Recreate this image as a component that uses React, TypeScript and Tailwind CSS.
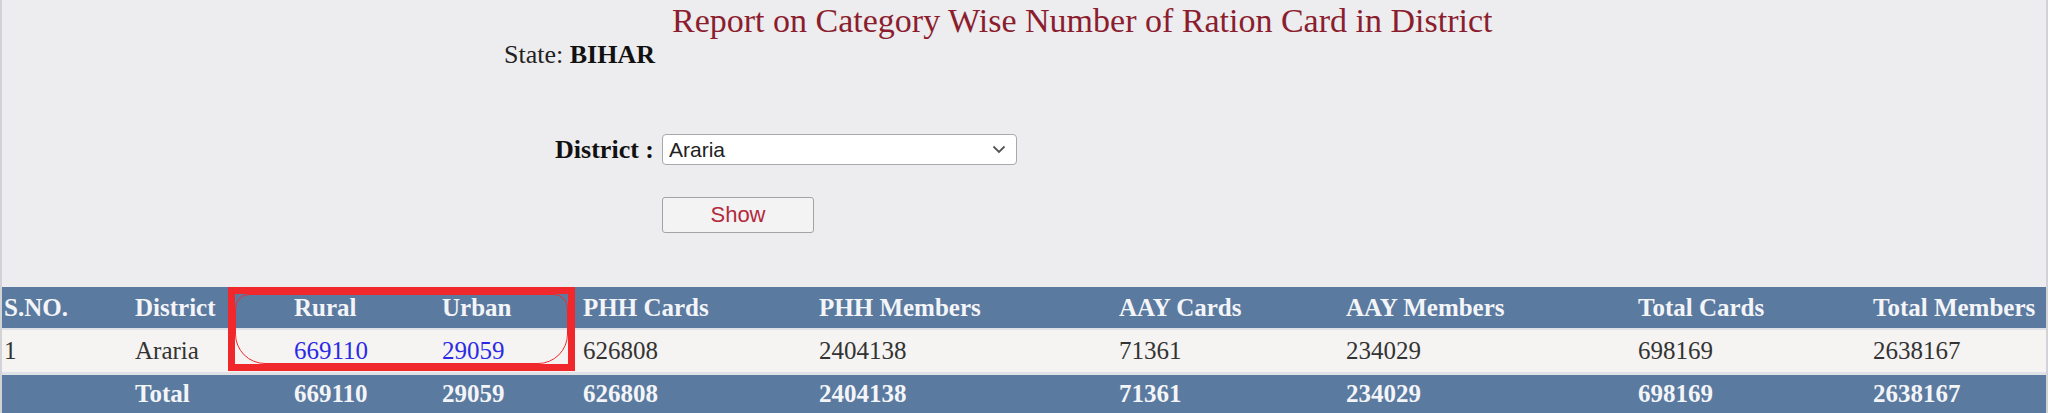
import { useState } from "react"

type Row = {
  sno: string
  district: string
  rural: string
  urban: string
  phhCards: string
  phhMembers: string
  aayCards: string
  aayMembers: string
  totalCards: string
  totalMembers: string
}

const rows: Row[] = [
  {
    sno: "1",
    district: "Araria",
    rural: "669110",
    urban: "29059",
    phhCards: "626808",
    phhMembers: "2404138",
    aayCards: "71361",
    aayMembers: "234029",
    totalCards: "698169",
    totalMembers: "2638167",
  },
]

export default function App() {
  const [district, setDistrict] = useState("Araria")

  return (
    <div className="min-h-[413px] w-[2048px] overflow-hidden bg-[#edecee] font-['Liberation_Serif',serif]">
      <div className="h-[413px] border-x-2 border-[#d3d2d6]">
        {/* Titulo */}
        <h1 className="pl-[670px] pt-[3px] text-[34px] font-normal leading-[36px] text-[#8b1e2e]">
          Report on Category Wise Number of Ration Card in District
        </h1>

        <div className="mt-[3px] pl-[502px] text-[26px] leading-[26px] text-[#222]">
          State: <span className="font-bold text-[#111]">BIHAR</span>
        </div>

        {/* Filtro */}
        <div className="mt-[66px] flex h-[31px] items-center">
          <label htmlFor="district" className="w-[660px] pr-[8px] text-right text-[26px] font-bold leading-[26px] text-[#111]">
            District :
          </label>
          <div className="relative h-[31px] w-[355px]">
            <select
              id="district"
              value={district}
              onChange={(e) => setDistrict(e.target.value)}
              className="h-full w-full appearance-none rounded-[4px] border border-[#a9a9ad] bg-white pl-[6px] font-['Liberation_Sans',sans-serif] text-[21px] leading-[29px] text-[#222] outline-none"
            >
              <option>Araria</option>
              <option>Arwal</option>
              <option>Aurangabad</option>
              <option>Banka</option>
            </select>
            <svg
              className="pointer-events-none absolute right-[11px] top-[11px] h-[9px] w-[14px]"
              viewBox="0 0 14 9"
              fill="none"
              stroke="#555"
              strokeWidth="1.8"
            >
              <path d="M1.5 1.5 L7 7 L12.5 1.5" />
            </svg>
          </div>
        </div>

        <div className="mt-[32px] pl-[660px]">
          <button
            type="button"
            className="h-[36px] w-[152px] rounded-[3px] border border-[#a3a3a6] bg-[#f3f3f4] font-['Liberation_Sans',sans-serif] text-[22px] leading-[34px] text-[#b22a3c]"
          >
            Show
          </button>
        </div>

        {/* Tabela */}
        <div className="relative mt-[54px]">
          <table className="w-[2044px] table-fixed border-collapse text-left text-[25px]">
            <thead>
              <tr className="h-[42px] border-b-2 border-[#dfe2e7] bg-[#5b7aa0] text-[#f4f5f8]">
                <th className="w-[132px] pl-[2px] font-bold">S.NO.</th>
                <th className="w-[157px] pl-[1px] font-bold">District</th>
                <th className="w-[148px] pl-[3px] font-bold">Rural</th>
                <th className="w-[141px] pl-[3px] font-bold">Urban</th>
                <th className="w-[236px] pl-[3px] font-bold">PHH Cards</th>
                <th className="w-[297px] pl-[3px] font-bold">PHH Members</th>
                <th className="w-[230px] pl-[6px] font-bold">AAY Cards</th>
                <th className="w-[294px] pl-[3px] font-bold">AAY Members</th>
                <th className="w-[233px] pl-[1px] font-bold">Total Cards</th>
                <th className="w-[176px] pl-[3px] font-bold">Total Members</th>
              </tr>
            </thead>
            <tbody>
              {rows.map((row) => (
                <tr key={row.sno} className="h-[44px] border-b-[3px] border-[#dfe2e7] bg-[#f5f4f2] text-[#333]">
                  <td className="pl-[2px]">{row.sno}</td>
                  <td className="pl-[1px]">{row.district}</td>
                  <td className="pl-[3px]">
                    <a href="#" className="text-[#2a2ae6]">{row.rural}</a>
                  </td>
                  <td className="pl-[3px]">
                    <a href="#" className="text-[#2a2ae6]">{row.urban}</a>
                  </td>
                  <td className="pl-[3px]">{row.phhCards}</td>
                  <td className="pl-[3px]">{row.phhMembers}</td>
                  <td className="pl-[6px]">{row.aayCards}</td>
                  <td className="pl-[3px]">{row.aayMembers}</td>
                  <td className="pl-[1px]">{row.totalCards}</td>
                  <td className="pl-[3px]">{row.totalMembers}</td>
                </tr>
              ))}
              <tr className="h-[40px] bg-[#5b7aa0] font-bold text-[#f4f5f8]">
                <td className="pl-[2px]"></td>
                <td className="pl-[1px]">Total</td>
                <td className="pl-[3px]">669110</td>
                <td className="pl-[3px]">29059</td>
                <td className="pl-[3px]">626808</td>
                <td className="pl-[3px]">2404138</td>
                <td className="pl-[6px]">71361</td>
                <td className="pl-[3px]">234029</td>
                <td className="pl-[1px]">698169</td>
                <td className="pl-[3px]">2638167</td>
              </tr>
            </tbody>
          </table>

          {/* Destaque vermelho (anotação) */}
          <div className="pointer-events-none absolute left-[226px] top-0 h-[84px] w-[347px] border-[7px] border-[#f0282c]">
            <div className="absolute inset-0 rounded-t-[14px] rounded-b-[30px] border-[1.5px] border-[#f0282c]"></div>
          </div>
        </div>
      </div>
    </div>
  )
}
